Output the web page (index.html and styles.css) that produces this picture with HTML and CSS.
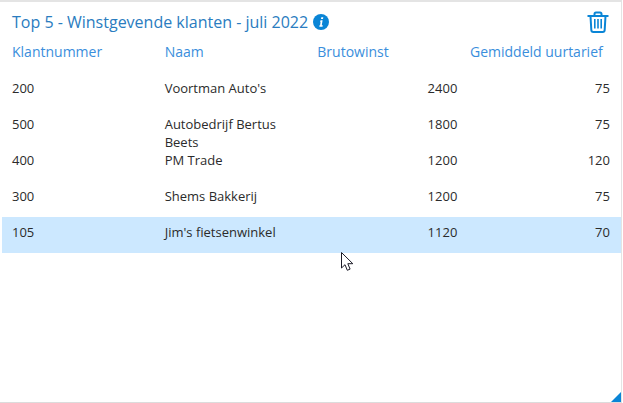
FILE: index.html
```html
<!DOCTYPE html>
<html lang="nl">
<head>
<meta charset="utf-8">
<title>Top 5</title>
<link rel="stylesheet" href="styles.css">
</head>
<body>
<section class="widget">
  <header class="head">
    <h2 class="title">Top 5 - Winstgevende klanten - juli 2022</h2>
    <svg class="info" viewBox="0 0 16 16" aria-hidden="true"><circle cx="8" cy="8" r="8" fill="#0a85d6"/><path d="M8.300 3.200h2l-.3 1.800H8zM7.600 6.300h2l-.8 5h1l-.3 1.400H6.300l.2-1.400h.6l.5-3.600h-.6z" fill="#fff"/></svg>
    <svg class="trash" viewBox="0 0 22 22" aria-hidden="true"><g fill="none" stroke="#0a85d6" stroke-width="2"><path d="M.5 5h21"/><path d="M7.500 5V3q0-1.500 1.500-1.500h4q1.500 0 1.500 1.500v2"/><path d="M3.500 5l.8 14q.1 2 2 2h9.400q1.900 0 2-2l.8-14"/></g><path d="M7 8h1.600v9.500H7zM10.200 8h1.600v9.500h-1.600zM13.400 8H15v9.500h-1.600z" fill="#0a85d6"/></svg>
  </header>
  <div class="grid labels">
    <div>Klantnummer</div><div>Naam</div><div>Brutowinst</div><div>Gemiddeld uurtarief</div>
  </div>
  <div class="rows">
    <div class="grid row"><div>200</div><div>Voortman Auto's</div><div class="num">2400</div><div class="num">75</div></div>
    <div class="grid row"><div>500</div><div>Autobedrijf Bertus Beets</div><div class="num">1800</div><div class="num">75</div></div>
    <div class="grid row"><div>400</div><div>PM Trade</div><div class="num">1200</div><div class="num">120</div></div>
    <div class="grid row"><div>300</div><div>Shems Bakkerij</div><div class="num">1200</div><div class="num">75</div></div>
    <div class="grid row active"><div>105</div><div>Jim's fietsenwinkel</div><div class="num">1120</div><div class="num">70</div></div>
  </div>
  <svg class="cursor" viewBox="0 0 14 20" aria-hidden="true"><path d="M.5.5v15.500l3.500-3.300 2.300 5.600 2.800-1.200-2.300-5.400h5z" fill="#fff" stroke="#1c1c28" stroke-width="1"/></svg>
  <span class="resize"></span>
</section>
</body>
</html>
```
FILE: styles.css
```css
* { box-sizing: border-box; }
html, body { margin: 0; padding: 0; background: #fff; }
body { width: 623px; height: 403px; overflow: hidden; }
.widget {
  position: relative;
  width: 622px;
  height: 403px;
  background: #fff;
  border-top: 2px solid #e4e4e4;
  border-right: 1px solid #e4e4e4;
  border-bottom: 1px solid #dcdcdc;
  font-family: "Open Sans", sans-serif;
  color: #2b2b2b;
}
.head {
  display: flex;
  align-items: center;
  height: 40px;
  padding: 0 12px 0 12px;
}
.title {
  margin: 0;
  font-size: 16px;
  font-weight: 400;
  line-height: 22px;
  color: #2a7cc0;
}
.info { width: 16px; height: 16px; margin-left: 5px; }
.trash { width: 22px; height: 22px; margin-left: auto; }
.grid {
  display: grid;
  grid-template-columns: repeat(4, 140px);
  column-gap: 12.67px;
  padding: 0 10px;
  margin-left: 2px;
}
.labels {
  font-size: 14px;
  line-height: 20px;
  color: #3a8edc;
  height: 31px;
}
.row {
  height: 36px;
  padding-top: 6px;
  font-size: 13px;
  line-height: 18px;
}
.num { text-align: right; }
.active { background: #cce8ff; }
.cursor {
  position: absolute;
  left: 341px;
  top: 250px;
  width: 14px;
  height: 20px;
}
.resize {
  position: absolute;
  right: 0;
  bottom: 0;
  width: 0;
  height: 0;
  border-style: solid;
  border-width: 0 0 10px 10px;
  border-color: transparent transparent #0a85d6 transparent;
}
```
